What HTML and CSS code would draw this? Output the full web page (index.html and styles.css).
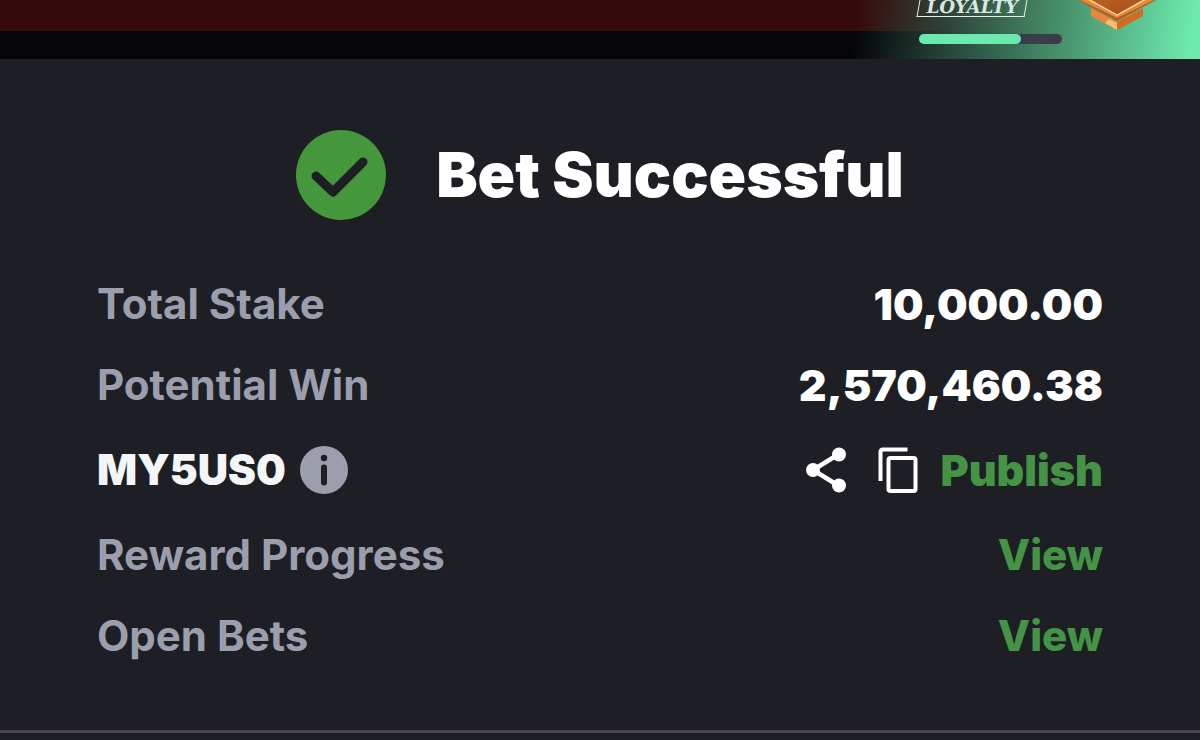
FILE: index.html
```html
<!DOCTYPE html>
<html lang="en">
<head>
<meta charset="utf-8">
<title>Bet Successful</title>
<link rel="stylesheet" href="styles.css">
</head>
<body>
<header class="topbar">
  <div class="loyalty">
    <div class="loyalty-info">
      <div class="loyalty-tag"><span>LOYALTY</span></div>
      <div class="progress"><div class="progress-fill"></div></div>
    </div>
    <svg class="medal" viewBox="0 0 78 31" aria-hidden="true">
      <defs>
        <linearGradient id="face" x1="0" y1="0" x2="1" y2="1"><stop offset="0" stop-color="#b86326"/><stop offset="1" stop-color="#a94b17"/></linearGradient>
      </defs>
      <path fill="#e9863a" d="M13 8 39 22V30L13 16z"/>
      <path fill="#f5bd70" d="M31 19 39 23V30L27 23z"/>
      <path fill="#d26a22" d="M65 8 39 22V30L65 16z"/>
      <path fill="#bd581b" d="M0 0 39 21 78 0z"/>
      <path fill="#e58a3b" d="M2 0 39 18 76 0z"/>
      <path fill="url(#face)" stroke="#ffe0a0" stroke-width="1.4" d="M8-2 39 15 70-2z"/>
    </svg>
  </div>
</header>
<main class="receipt">
  <div class="heading">
    <svg class="check" viewBox="0 0 90 90" aria-hidden="true">
      <circle cx="45" cy="45" r="45" fill="#44973a"/>
      <path d="M20 46 37 62 67 32" fill="none" stroke="#1e1f25" stroke-width="9" stroke-linecap="round" stroke-linejoin="round"/>
    </svg>
    <h1>Bet Successful</h1>
  </div>
  <dl class="details">
    <div class="row"><dt>Total Stake</dt><dd>10,000.00</dd></div>
    <div class="row"><dt>Potential Win</dt><dd>2,570,460.38</dd></div>
    <div class="row row-code">
      <dt class="code">MY5US0
        <button class="icon-button" type="button" aria-label="Booking code information">
          <svg class="info" viewBox="0 0 48 48"><circle cx="24" cy="24" r="24" fill="#9b9fad"/><circle cx="24" cy="12" r="3.2" fill="#1e1f25"/><path d="M24 21.500V36.500" stroke="#1e1f25" stroke-width="6" stroke-linecap="round"/></svg>
        </button>
      </dt>
      <dd class="actions">
        <button class="icon-button" type="button" aria-label="Share">
          <svg class="share" viewBox="0 0 40 46"><path d="M33 7 7 23 33 39" fill="none" stroke="#fff" stroke-width="4.500"/><g fill="#fff"><circle cx="33" cy="7.500" r="7"/><circle cx="7" cy="23" r="7"/><circle cx="33" cy="38.500" r="7"/></g></svg>
        </button>
        <button class="icon-button" type="button" aria-label="Copy">
          <svg class="copy" viewBox="0 0 40 46" fill="none" stroke="#fff" stroke-width="4"><path d="M29.500 2.500H5Q2.500 2.500 2.500 5V34"/><rect x="10.500" y="11" width="27" height="33" rx="2"/></svg>
        </button>
        <a class="link" href="#publish">Publish</a>
      </dd>
    </div>
    <div class="row"><dt>Reward Progress</dt><dd><a class="link view" href="#reward">View</a></dd></div>
    <div class="row"><dt>Open Bets</dt><dd><a class="link view" href="#open-bets">View</a></dd></div>
  </dl>
</main>
</body>
</html>
```

FILE: styles.css
```css
* { box-sizing: border-box; }

body {
  margin: 0;
  background: #1e1f25;
  color: #fff;
  font-family: Inter, "Liberation Sans", sans-serif;
}

.topbar {
  display: flex;
  justify-content: flex-end;
  height: 59px;
  overflow: hidden;
  background: linear-gradient(#360b0d 0 31px, #050508 31px);
}

.loyalty {
  display: flex;
  align-items: flex-start;
  gap: 16px;
  width: 352px;
  padding-left: 70px;
  background: linear-gradient(97deg, transparent 3%, #2d5143cc 28%, #46906b 60%, #6deaae 97%);
}

.loyalty-info {
  display: flex;
  flex-direction: column;
  gap: 17px;
  width: 144px;
}

.loyalty-tag {
  display: flex;
  justify-content: center;
  width: 108px;
  height: 17px;
  border: 1px solid #e5efe9;
  border-top: 0;
  transform: skewX(-10deg);
  color: #dce6e0;
  font: 700 18px/14px "DejaVu Serif", serif;
}

.progress {
  height: 10px;
  margin-left: 1px;
  border-radius: 5px;
  background: #393c49;
}

.progress-fill {
  width: 71%;
  height: 100%;
  border-radius: 5px;
  background: #6ceaae;
}

.medal {
  width: 78px;
  height: 31px;
}

.receipt {
  padding: 71px 97px 68px;
  border-bottom: 3px solid #48474f;
}

.heading {
  display: flex;
  align-items: center;
  justify-content: center;
  gap: 50px;
}

.check {
  width: 90px;
  height: 90px;
}

h1 {
  margin: 0;
  font-size: 62px;
  font-weight: 900;
  line-height: 90px;
}

.details {
  display: flex;
  flex-direction: column;
  gap: 29px;
  margin: 58px 0 0;
  font-size: 43px;
  line-height: 52px;
}

.row {
  display: flex;
  align-items: center;
  justify-content: space-between;
}

.row-code { height: 60px; }

dt {
  color: #9b9fad;
  font-size: 42px;
  font-weight: 700;
}

dd {
  margin: 0;
  font-weight: 900;
}

.code {
  display: flex;
  align-items: center;
  gap: 14px;
  color: #f4f5f8;
  font-weight: 900;
}

.actions {
  display: flex;
  align-items: center;
  gap: 22px;
}

.icon-button {
  display: flex;
  padding: 0;
  border: 0;
  background: none;
  cursor: pointer;
}

.info {
  width: 48px;
  height: 48px;
}

.share,
.copy {
  width: 40px;
  height: 46px;
}

.share { margin-right: 10px; }

.link {
  color: #459446;
  text-decoration: none;
}

.view {
  display: block;
  font-size: 42px;
  font-weight: 800;
}
```
